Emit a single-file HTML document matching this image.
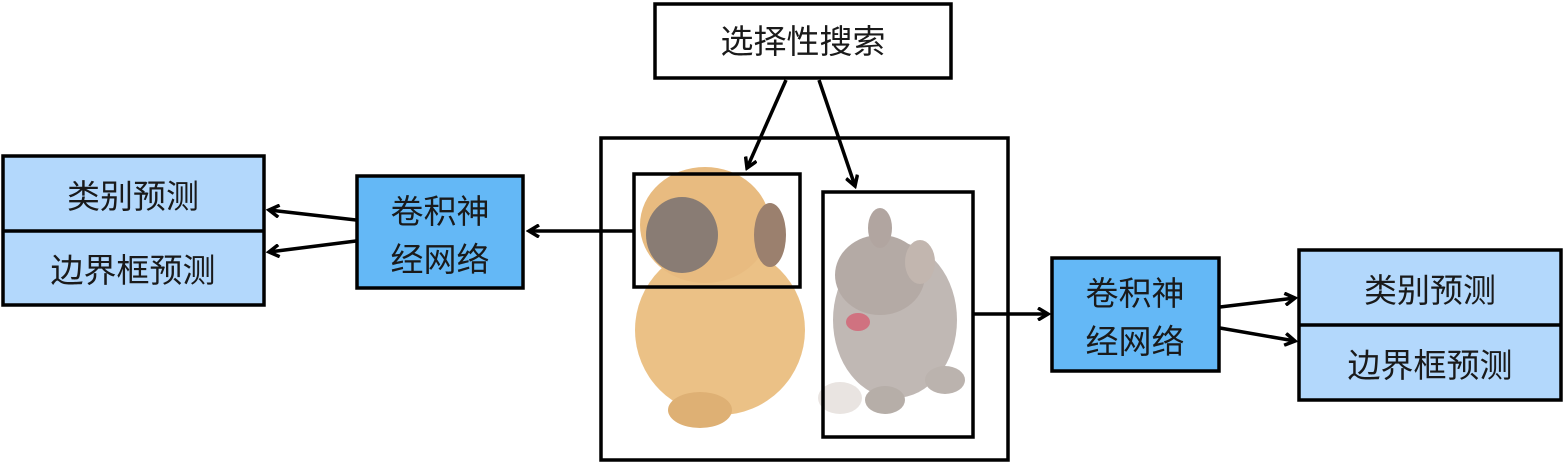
<!DOCTYPE html>
<html><head><meta charset="utf-8"><style>
html,body{margin:0;padding:0;background:#fff;width:1563px;height:467px;overflow:hidden}
text{font-family:"Liberation Sans","Noto Sans CJK SC",sans-serif;font-size:33px;fill:#1a1a1a;text-anchor:middle}
</style></head><body>
<svg width="1563" height="467" viewBox="0 0 1563 467" xmlns="http://www.w3.org/2000/svg">
<defs><marker id="a" markerWidth="14" markerHeight="14" refX="11" refY="7" orient="auto" markerUnits="userSpaceOnUse">
<path d="M1,1 L11,7 L1,13" fill="none" stroke="#000" stroke-width="3.5"/></marker></defs>
<g stroke="none" opacity="0.85">
<ellipse cx="720" cy="330" rx="85" ry="85" fill="#e8b772"/>
<ellipse cx="705" cy="225" rx="65" ry="58" fill="#e4b06a"/>
<ellipse cx="682" cy="235" rx="36" ry="38" fill="#75665c"/>
<ellipse cx="770" cy="235" rx="16" ry="32" fill="#8a6a55"/>
<ellipse cx="700" cy="410" rx="32" ry="18" fill="#d9a35c"/>
<ellipse cx="840" cy="398" rx="22" ry="16" fill="#e6e0dc"/>
<ellipse cx="895" cy="320" rx="62" ry="78" fill="#b6aca8"/>
<ellipse cx="880" cy="275" rx="45" ry="40" fill="#a89c96"/>
<ellipse cx="880" cy="228" rx="12" ry="20" fill="#a49690"/>
<ellipse cx="920" cy="262" rx="15" ry="22" fill="#b8aaa2"/>
<ellipse cx="858" cy="322" rx="12" ry="9" fill="#c85a6a"/>
<ellipse cx="885" cy="400" rx="20" ry="14" fill="#aaa09a"/>
<ellipse cx="945" cy="380" rx="20" ry="14" fill="#b0a6a0"/>
</g>
<g stroke="#000" stroke-width="3.5">
<rect x="655" y="4" width="296" height="74" fill="#fff"/>
<rect x="601" y="138" width="407" height="322" fill="none"/>
<rect x="634" y="174" width="166" height="113" fill="none"/>
<rect x="823" y="192" width="150" height="245" fill="none"/>
<rect x="357" y="176" width="166" height="112" fill="#64b8f6"/>
<rect x="1052" y="258" width="167" height="113" fill="#64b8f6"/>
<rect x="3" y="156" width="261" height="149" fill="#b3d8fc"/>
<line x1="3" y1="231" x2="264" y2="231"/>
<rect x="1299" y="250" width="262" height="150" fill="#b3d8fc"/>
<line x1="1299" y1="325" x2="1561" y2="325"/>
<line x1="786" y1="80" x2="747" y2="168" marker-end="url(#a)"/>
<line x1="819" y1="80" x2="855" y2="186" marker-end="url(#a)"/>
<line x1="634" y1="231" x2="529" y2="231" marker-end="url(#a)"/>
<line x1="356" y1="220" x2="269" y2="210" marker-end="url(#a)"/>
<line x1="356" y1="241" x2="269" y2="252" marker-end="url(#a)"/>
<line x1="973" y1="314" x2="1048" y2="314" marker-end="url(#a)"/>
<line x1="1220" y1="307" x2="1295" y2="298" marker-end="url(#a)"/>
<line x1="1220" y1="328" x2="1295" y2="341" marker-end="url(#a)"/>
</g>
<text x="803" y="53">选择性搜索</text>
<text x="440" y="223">卷积神</text>
<text x="440" y="271">经网络</text>
<text x="1135" y="305">卷积神</text>
<text x="1135" y="353">经网络</text>
<text x="133" y="208">类别预测</text>
<text x="133" y="282">边界框预测</text>
<text x="1430" y="302">类别预测</text>
<text x="1430" y="377">边界框预测</text>
</svg>
</body></html>
